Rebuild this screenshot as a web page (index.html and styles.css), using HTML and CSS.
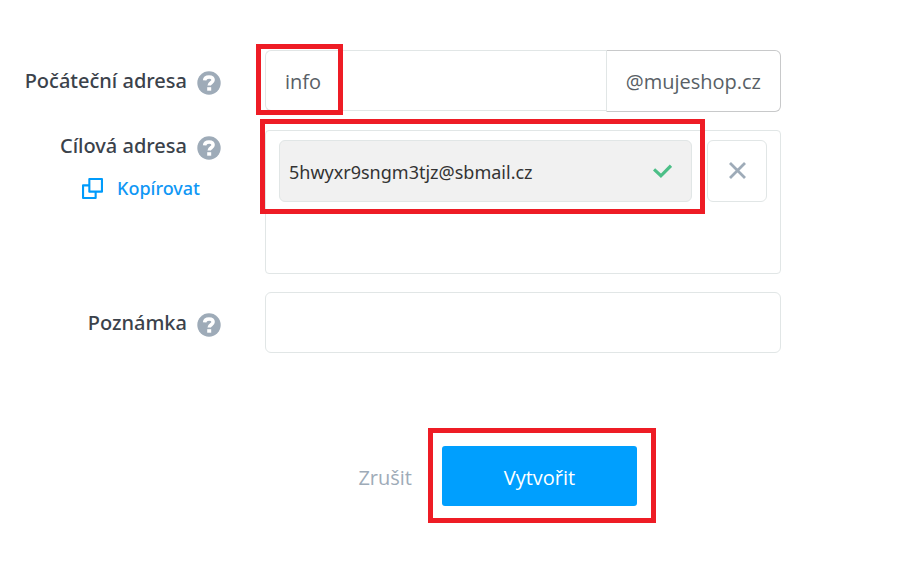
FILE: index.html
```html
<!DOCTYPE html>
<html lang="cs">
<head>
<meta charset="utf-8">
<meta name="viewport" content="width=device-width, initial-scale=1">
<title>Přesměrování e-mailu</title>
<link rel="stylesheet" href="styles.css">
</head>
<body>
<svg width="0" height="0" class="sprite" aria-hidden="true">
  <symbol id="help" viewBox="0 0 24 24">
    <circle cx="12" cy="12" r="11.7" fill="#9eabb8"/>
    <path d="M7.600 9.400C7.800 7 9.500 5.900 12 5.900c2.600 0 4.100 1.300 4.100 3.100 0 2.700-3.900 2.800-3.900 5.600" fill="none" stroke="#fff" stroke-width="3.500"/>
    <rect x="10.200" y="16.200" width="4" height="3.500" fill="#fff"/>
  </symbol>
</svg>
<form class="form">
  <div class="row">
    <div class="caption">
      <label for="source">Počáteční adresa</label>
      <button type="button" class="help" aria-label="Nápověda"><svg><use href="#help"/></svg></button>
    </div>
    <div class="group">
      <input id="source" class="field group-field" type="text" value="info">
      <span class="suffix">@mujeshop.cz</span>
      <span class="mark mark-source"></span>
    </div>
  </div>
  <div class="row">
    <div class="caption caption-top">
      <label for="target">Cílová adresa</label>
      <button type="button" class="help" aria-label="Nápověda"><svg><use href="#help"/></svg></button>
      <button type="button" class="copy">
        <svg viewBox="0 0 20 20" fill="none" stroke="#009bfb" stroke-width="2" stroke-linejoin="round"><path d="M7 1h12v12H7z"/><path d="M7 7H1v12h12v-6"/></svg>
        Kopírovat
      </button>
    </div>
    <div class="targets">
      <div class="target">
        <input id="target" class="field target-field" type="text" value="5hwyxr9sngm3tjz@sbmail.cz" readonly>
        <svg class="check" viewBox="0 0 18 13" fill="none" stroke="#4cbf87" stroke-width="3"><path d="M1 5l6.500 6L17 1.500"/></svg>
        <span class="mark mark-target"></span>
      </div>
      <button type="button" class="remove" aria-label="Odebrat">
        <svg viewBox="0 0 17 17" stroke="#9eabb8" stroke-width="2.800"><path d="M1 1l15 15M16 1L1 16"/></svg>
      </button>
    </div>
  </div>
  <div class="row">
    <div class="caption">
      <label for="note">Poznámka</label>
      <button type="button" class="help" aria-label="Nápověda"><svg><use href="#help"/></svg></button>
    </div>
    <input id="note" class="field" type="text">
  </div>
  <div class="actions">
    <button type="button" class="cancel">Zrušit</button>
    <div class="submit-wrap">
      <button type="submit" class="submit">Vytvořit</button>
      <span class="mark mark-submit"></span>
    </div>
  </div>
</form>
</body>
</html>
```
FILE: styles.css
```css
* { box-sizing: border-box; }

body {
  margin: 0;
  background: #fff;
  color: #3b424b;
  font: 20px/30px "Open Sans", "Noto Sans", sans-serif;
}

button {
  padding: 0;
  border: 0;
  background: none;
  font: inherit;
  cursor: pointer;
}

svg { display: block; }
.sprite { position: absolute; }

.form {
  display: flex;
  flex-direction: column;
  gap: 18px;
  padding: 50px 119px 40px 0;
}

.row {
  display: grid;
  grid-template-columns: 221px minmax(0, 1fr);
  column-gap: 44px;
  align-items: start;
}

.caption {
  display: grid;
  grid-template-columns: 1fr 24px;
  column-gap: 10px;
  align-items: center;
  padding-top: 16px;
  font-family: "Noto Sans", "Open Sans", sans-serif;
  font-size: 20px;
  font-weight: 500;
  text-align: right;
  white-space: nowrap;
}

.caption-top { padding-top: 1px; }

.help { padding-top: 3px; }
.help svg { width: 24px; height: 24px; }

.copy {
  grid-column: 1 / -1;
  justify-self: end;
  display: flex;
  align-items: center;
  gap: 14px;
  margin: 12px 21px 0 0;
  color: #0f97f5;
  font-size: 18px;
}

.copy svg { width: 21px; height: 21px; }

.field {
  width: 100%;
  min-width: 0;
  height: 61px;
  padding: 2px 19px 0;
  border: 1px solid #e1e6e6;
  border-radius: 6px;
  background: #fff;
  color: #595f66;
  font: inherit;
  outline: 0;
}

.group {
  position: relative;
  display: flex;
  align-items: flex-start;
}

.group-field {
  flex: 1;
  border-right: 0;
  border-radius: 6px 0 0 6px;
}

.suffix {
  padding: 16px 19px 14px;
  border: 1px solid #c8c9ca;
  border-left-color: #e1e6e6;
  border-radius: 0 6px 6px 0;
  color: #595f66;
}

.targets {
  display: flex;
  align-items: flex-start;
  gap: 15px;
  min-height: 144px;
  padding: 9px 13px;
  border: 1px solid #e1e6e6;
  border-radius: 4px;
}

.target {
  position: relative;
  flex: 1;
}

.target-field {
  display: block;
  height: 62px;
  padding: 2px 60px 0 9px;
  background: #f1f1f1;
  color: #333;
  font-family: "Noto Sans", "Open Sans", sans-serif;
  font-size: 18px;
}

.check {
  position: absolute;
  top: 24px;
  right: 20px;
  width: 19px;
  height: 14px;
}

.remove {
  display: grid;
  place-items: center;
  width: 60px;
  height: 62px;
  padding-bottom: 2px;
  border: 1px solid #e1e6e6;
  border-radius: 6px;
}

.remove svg { width: 17px; height: 17px; }

.actions {
  display: flex;
  align-items: center;
  justify-content: flex-end;
  gap: 30px;
  margin-top: 75px;
  padding-right: 144px;
}

.cancel,
.submit {
  height: 60px;
  padding-top: 3px;
}

.cancel { color: #9eabb8; }

.submit-wrap { position: relative; }

.submit {
  display: block;
  width: 195px;
  border-radius: 3px;
  background: #009ffe;
  color: #fff;
}

/* Red frames around the highlighted controls */
.mark {
  position: absolute;
  border: 5px solid #ee1c25;
  pointer-events: none;
}

.mark-source { top: -6px; left: -9px; width: 87px; height: 71px; }
.mark-target { inset: -21px -13px -12px -19px; }
.mark-submit { inset: -18px -19px -17px -14px; }
```
